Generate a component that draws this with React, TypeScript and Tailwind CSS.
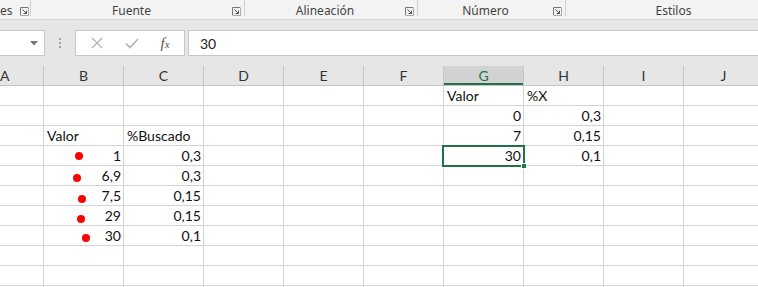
const COLS = ["A", "B", "C", "D", "E", "F", "G", "H", "I", "J"];

type Cell = { v: string; num?: boolean };

const DATA: Record<string, Cell> = {
  G1: { v: "Valor" },
  H1: { v: "%X" },
  G2: { v: "0", num: true },
  H2: { v: "0,3", num: true },
  B3: { v: "Valor" },
  C3: { v: "%Buscado" },
  G3: { v: "7", num: true },
  H3: { v: "0,15", num: true },
  B4: { v: "1", num: true },
  C4: { v: "0,3", num: true },
  G4: { v: "30", num: true },
  H4: { v: "0,1", num: true },
  B5: { v: "6,9", num: true },
  C5: { v: "0,3", num: true },
  B6: { v: "7,5", num: true },
  C6: { v: "0,15", num: true },
  B7: { v: "29", num: true },
  C7: { v: "0,15", num: true },
  B8: { v: "30", num: true },
  C8: { v: "0,1", num: true },
};

// red shapes drawn over column B (row -> offset inside the cell)
const DOTS: Record<number, string> = {
  4: "left-[31px] top-[6px]",
  5: "left-[29px] top-[8px]",
  6: "left-[34px] top-[9px]",
  7: "left-[33px] top-[9px]",
  8: "left-[38px] top-[8px]",
};

function Launcher() {
  return (
    <svg width="9" height="9" viewBox="0 0 9 9" className="shrink-0">
      <path d="M0.5 8V0.5H8" fill="none" stroke="#777" />
      <path d="M0.5 8.5H8.5V0.5" fill="none" stroke="#aaa" />
      <path d="M2.5 2.5L6.5 6.5M6.5 3.5V6.5H3.5" fill="none" stroke="#555" />
    </svg>
  );
}

function Group({ label, w }: { label: string; w: string }) {
  return (
    <div className={`flex h-full shrink-0 items-start ${w}`}>
      <div className="flex h-full flex-1 items-center justify-center pt-[2px]">{label}</div>
      <div className="flex h-full items-center pt-[3px] pr-[3px]">
        <Launcher />
      </div>
      <div className="h-[16px] w-px bg-[#d2d2d2]" />
    </div>
  );
}

function Ribbon() {
  return (
    <div className="flex h-[20px] border-b border-[#d5d5d5] bg-[#f3f3f3] text-[12px] text-[#444] font-['Noto_Sans',sans-serif] whitespace-nowrap overflow-hidden">
      <div className="flex h-full w-[31px] shrink-0 items-start">
        <div className="flex h-full flex-1 items-center pt-[2px]">es</div>
        <div className="flex h-full items-center pt-[3px] pr-[1px]">
          <Launcher />
        </div>
        <div className="h-[16px] w-px bg-[#d2d2d2]" />
      </div>
      <Group label="Fuente" w="w-[214px]" />
      <Group label="Alineación" w="w-[173px]" />
      <Group label="Número" w="w-[148px]" />
      <div className="flex h-full w-[215px] shrink-0 items-center justify-center pt-[2px]">Estilos</div>
    </div>
  );
}

function FormulaBar() {
  return (
    <div className="bg-[#e6e6e6] pt-[10px] pb-[10px]">
      <div className="flex h-[26px] items-stretch">
        <div className="flex w-[45px] items-center justify-end border-y border-r border-[#c6c6c6] bg-white pr-[6px]">
          <svg width="8" height="5" viewBox="0 0 8 5">
            <path d="M0 0H8L4 4.5Z" fill="#777" />
          </svg>
        </div>
        <div className="flex w-[30px] flex-col items-center justify-center gap-[2px]">
          <div className="h-[2px] w-[2px] bg-[#a0a0a0]" />
          <div className="h-[2px] w-[2px] bg-[#a0a0a0]" />
          <div className="h-[2px] w-[2px] bg-[#a0a0a0]" />
        </div>
        <div className="flex w-[110px] items-center border border-[#c6c6c6] bg-white">
          <div className="flex w-[38px] justify-center pl-[4px]">
            <svg width="12" height="12" viewBox="0 0 12 12">
              <path d="M1 1L11 11M11 1L1 11" stroke="#b4b4b4" strokeWidth="1.3" />
            </svg>
          </div>
          <div className="flex w-[34px] justify-center pl-[2px]">
            <svg width="14" height="11" viewBox="0 0 14 11">
              <path d="M1 5.5L5 9.5L13 1" fill="none" stroke="#b4b4b4" strokeWidth="1.6" />
            </svg>
          </div>
          <div className="flex flex-1 justify-center pr-[2px] font-['Liberation_Serif',serif] italic text-[#555]">
            <span className="text-[15px] leading-none">f</span>
            <span className="mt-[3px] text-[11px] leading-none">x</span>
          </div>
        </div>
        <div className="w-[3px]" />
        <div className="flex flex-1 items-center border-y border-l border-[#c6c6c6] bg-white pl-[11px] text-[14px] text-[#222] font-['Lato',sans-serif]">
          30
        </div>
      </div>
    </div>
  );
}

function Sheet() {
  const rows = Array.from({ length: 11 }, (_, i) => i + 1);
  return (
    <div className="relative font-['Lato',sans-serif] text-[14px] text-[#111]">
      <div className="flex h-[20px] border-b border-[#c6c6c6] bg-[#e6e6e6]">
        {COLS.map((c, i) => (
          <div
            key={c}
            className={`flex shrink-0 items-center border-r border-[#c6c6c6] text-[#333] ${
              i === 0 ? "w-[44px] justify-start" : "w-[80px] justify-center"
            } ${c === "G" ? "bg-[#d2d2d2] text-[#217346] shadow-[inset_0_-2px_0_#217346]" : ""}`}
          >
            {c}
          </div>
        ))}
      </div>
      {rows.map((r) => (
        <div key={r} className="flex h-[20px] border-b border-[#d4d4d4] bg-white">
          {COLS.map((c, i) => {
            const cell = DATA[c + r];
            return (
              <div
                key={c}
                className={`relative flex shrink-0 items-end border-r border-[#d4d4d4] pb-[1px] leading-[17px] ${
                  i === 0 ? "w-[44px]" : "w-[80px]"
                } ${cell?.num ? "justify-end pr-[2px]" : "justify-start pl-[3px]"}`}
              >
                {c === "B" && DOTS[r] && (
                  <span className={`absolute h-[8px] w-[8px] rounded-full bg-[#ff0000] ${DOTS[r]}`} />
                )}
                {cell?.v}
              </div>
            );
          })}
        </div>
      ))}
      {/* active cell G4 */}
      <div className="absolute left-[442px] top-[79px] h-[22px] w-[83px] border-2 border-[#217346]" />
      <div className="absolute left-[521px] top-[97px] h-[6px] w-[6px] border border-white bg-[#217346]" />
    </div>
  );
}

export default function App() {
  return (
    <div className="h-[287px] w-[758px] overflow-hidden bg-white">
      <Ribbon />
      <FormulaBar />
      <Sheet />
    </div>
  );
}
